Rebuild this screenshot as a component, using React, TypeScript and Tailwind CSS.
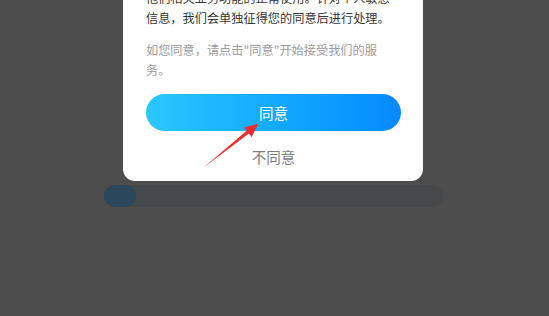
const cjk = { fontFamily: '"Noto Sans CJK SC", "Noto Sans", sans-serif' };

function Arrow() {
  return (
    <svg
      className="pointer-events-none absolute inset-0"
      width="549"
      height="316"
      viewBox="0 0 549 316"
    >
      <polygon
        points="203,168 248.9,133.5 251.6,136.9 258.5,123.6 244,127.4 246.7,130.7"
        fill="#ec2f2c"
      />
    </svg>
  );
}

export default function App() {
  return (
    <div
      className="relative h-[316px] w-[549px] overflow-hidden bg-[#4d4d4d]"
      style={cjk}
    >
      <div className="flex flex-col">
        <section className="-mt-[52px] ml-[123px] w-[300px] rounded-b-[12px] bg-white pb-[14px] pl-[23px] pr-[22px] pt-5">
          <p className="whitespace-nowrap text-[12.2px] leading-[20px] text-[#353535]">
            您可以拒绝提供，但不影响您使用
            <br />
            他们相关业务功能的正常使用。针对个人敏感
            <br />
            信息，我们会单独征得您的同意后进行处理。
          </p>
          <p className="mt-3 whitespace-nowrap text-[12.2px] leading-[20px] text-[#9a9a9e]">
            如您同意，请点击"同意"开始接受我们的服
            <br />
            务。
          </p>
          <button
            type="button"
            className="mt-[14px] flex h-[37px] w-[255px] items-center justify-center rounded-full bg-gradient-to-r from-[#2ac8fd] to-[#078aff] text-[14.5px] text-white"
          >
            同意
          </button>
          <div className="mt-4 w-[255px] text-center text-[14.5px] leading-[20px] text-[#7b7d86]">
            不同意
          </div>
        </section>
        <div className="ml-[104px] mt-1 flex h-[22px] w-[339px] rounded-full bg-[#46494b]">
          <div className="h-full w-[32px] rounded-full bg-[#2b475c]" />
        </div>
      </div>
      <Arrow />
    </div>
  );
}
